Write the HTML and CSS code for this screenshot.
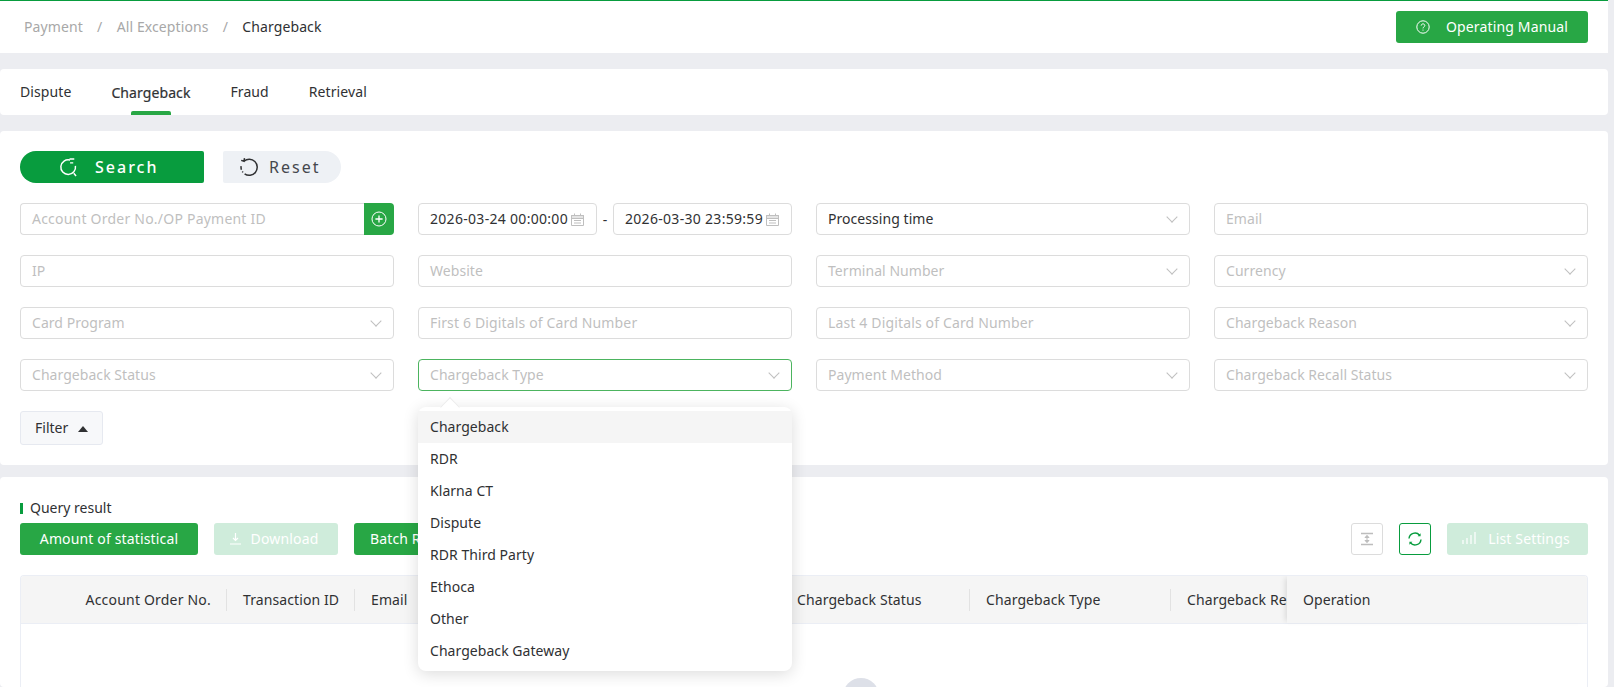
FILE: index.html
```html
<!DOCTYPE html>
<html>
<head>
    <meta http-equiv="Content-Type" content="text/html; charset=utf-8" />
    <title>Chargeback</title>
    <link rel="stylesheet" href="styles.css">
</head>
<body>
    <div class="page">
        <div class="header">
            <div class="crumbs">
                <span class="crumb">Payment</span>
                <span class="crumb-sep">/</span>
                <span class="crumb">All Exceptions</span>
                <span class="crumb-sep">/</span>
                <span class="crumb-now">Chargeback</span>
            </div>
            <div class="btn btn-manual">
                <svg class="icon-manual" width="14" height="14" viewBox="0 0 14 14" fill="none" stroke="#fff" stroke-width="1">
                    <circle cx="7" cy="7" r="6.2"></circle>
                    <path d="M5.2 5.6c0-1 .8-1.7 1.8-1.7s1.8.7 1.8 1.6c0 1.4-1.8 1.4-1.8 2.9"></path>
                    <path d="M7 9.6v1"></path>
                </svg>
                Operating Manual
            </div>
        </div>

        <div class="tabs">
            <span class="tab">Dispute</span>
            <span class="tab tab-on">Chargeback</span>
            <span class="tab">Fraud</span>
            <span class="tab">Retrieval</span>
        </div>

        <div class="card search-card">
            <div class="search-btns">
                <div class="btn-search">
                    <svg width="21" height="21" viewBox="0 0 20 20" fill="none" stroke="#fff" stroke-width="1.4">
                        <path d="M11.5 2.9A7 7 0 1 0 16.6 8.5"></path>
                        <path d="M11 2h4.5M11.5 5.6h3M15 15.5l2.2 2.6"></path>
                    </svg>
                    <span>Search</span>
                </div>
                <div class="btn-reset">
                    <svg width="20" height="20" viewBox="0 0 20 20" fill="none" stroke="#303133" stroke-width="1.5">
                        <path d="M5 4.2A8 8 0 1 1 5.6 16.8" ></path>
                        <path d="M2.4 12.8a8 8 0 0 1-.3-3.6M4 15.4l-.7-.9" ></path>
                        <path d="M2.2 3.4 5 4.2l.5-3"></path>
                    </svg>
                    <span>Reset</span>
                </div>
            </div>

            <div class="form-grid">
                <div class="field-group">
                    <div class="field field-joined"><span class="ph wide">Account Order No./OP Payment ID</span></div>
                    <div class="field-add">
                        <svg width="16" height="16" viewBox="0 0 16 16" fill="none" stroke="#fff" stroke-width="1">
                            <circle cx="8" cy="8" r="7"></circle>
                            <path d="M8 4.4v7.2M4.4 8h7.2" stroke-width="1.3"></path>
                        </svg>
                    </div>
                </div>
                <div class="date-range">
                    <div class="field field-date">
                        <span class="val date-val">2026-03-24 00:00:00</span>
                        <svg class="icon-cal" width="13" height="13" viewBox="0 0 13 13" fill="none" stroke="#bfbfbf">
                            <path d="M.5 2.5h12v3H.5z" fill="#e4e4e4"></path>
                            <path d="M.5 2.5h12v10H.5zM3.5 .5v2M9.5 .5v2M3 7.5h7M3 10h7"></path>
                        </svg>
                    </div>
                    <span class="date-sep">-</span>
                    <div class="field field-date">
                        <span class="val date-val">2026-03-30 23:59:59</span>
                        <svg class="icon-cal" width="13" height="13" viewBox="0 0 13 13" fill="none" stroke="#bfbfbf">
                            <path d="M.5 2.5h12v3H.5z" fill="#e4e4e4"></path>
                            <path d="M.5 2.5h12v10H.5zM3.5 .5v2M9.5 .5v2M3 7.5h7M3 10h7"></path>
                        </svg>
                    </div>
                </div>
                <div class="field field-select"><span class="val">Processing time</span><i class="caret"></i></div>
                <div class="field"><span class="ph">Email</span></div>

                <div class="field"><span class="ph">IP</span></div>
                <div class="field"><span class="ph">Website</span></div>
                <div class="field field-select"><span class="ph">Terminal Number</span><i class="caret"></i></div>
                <div class="field field-select"><span class="ph">Currency</span><i class="caret"></i></div>

                <div class="field field-select"><span class="ph">Card Program</span><i class="caret"></i></div>
                <div class="field"><span class="ph digits">First 6 Digitals of Card Number</span></div>
                <div class="field"><span class="ph digits">Last 4 Digitals of Card Number</span></div>
                <div class="field field-select"><span class="ph">Chargeback Reason</span><i class="caret"></i></div>

                <div class="field field-select"><span class="ph">Chargeback Status</span><i class="caret"></i></div>
                <div class="field field-select field-open">
                    <span class="ph">Chargeback Type</span><i class="caret"></i>
                    <div class="dropdown">
                        <i class="dropdown-arrow"></i>
                        <div class="dropdown-item dropdown-item-on">Chargeback</div>
                        <div class="dropdown-item">RDR</div>
                        <div class="dropdown-item">Klarna CT</div>
                        <div class="dropdown-item">Dispute</div>
                        <div class="dropdown-item">RDR Third Party</div>
                        <div class="dropdown-item">Ethoca</div>
                        <div class="dropdown-item">Other</div>
                        <div class="dropdown-item">Chargeback Gateway</div>
                    </div>
                </div>
                <div class="field field-select"><span class="ph">Payment Method</span><i class="caret"></i></div>
                <div class="field field-select"><span class="ph">Chargeback Recall Status</span><i class="caret"></i></div>
            </div>

            <div class="btn-filter">Filter <i class="tri-up"></i></div>
        </div>

        <div class="card result-card">
            <div class="result-title">Query result</div>
            <div class="toolbar">
                <div class="btn btn-amount">Amount of statistical</div>
                <div class="btn btn-off btn-download">
                    <svg width="13" height="13" viewBox="0 0 13 13" fill="none" stroke="#fff" stroke-width="1.2">
                        <path d="M6.5 1v7M4 6l2.5 2.5L9 6M1 12h11"></path>
                    </svg>
                    Download
                </div>
                <div class="btn btn-batch">Batch Refund</div>
                <div class="toolbar-right">
                    <div class="icon-btn">
                        <svg width="14" height="14" viewBox="0 0 14 14" fill="none" stroke="#bdbdbd">
                            <path d="M1 1.5h12M1 12.5h12" stroke-width="1.5"></path>
                            <path d="M7 3.5v7" stroke-width="1"></path>
                            <path d="M5 5.5 7 3.5l2 2zM5 8.5l2 2 2-2z" fill="#bdbdbd"></path>
                        </svg>
                    </div>
                    <div class="icon-btn icon-btn-on">
                        <svg width="14" height="14" viewBox="0 0 14 14" fill="none" stroke="#089c3e" stroke-width="1.4">
                            <path d="M1 6.5A6 6 0 0 1 11.6 3.2"></path>
                            <path d="M13 7.5A6 6 0 0 1 2.4 10.8"></path>
                            <path d="M12.6 1.2v3h-3zM1.4 12.8v-3h3z" fill="#089c3e" stroke="none"></path>
                        </svg>
                    </div>
                    <div class="btn btn-off btn-settings">
                        <svg width="14" height="13" viewBox="0 0 14 13" fill="none" stroke="#fff" stroke-width="1.2">
                            <path d="M1 12V8M5 12V6M9 12V3M13 12V0"></path>
                        </svg>
                        List Settings
                    </div>
                </div>
            </div>

            <div class="table">
                <div class="thead">
                    <div class="thead-scroll">
                        <div class="th th-order">Account Order No.</div>
                        <div class="th th-trans">Transaction ID</div>
                        <div class="th th-email">Email</div>
                        <div class="th th-status">Chargeback Status</div>
                        <div class="th th-type">Chargeback Type</div>
                        <div class="th th-reason">Chargeback Reason</div>
                    </div>
                    <div class="th-fixed">Operation</div>
                </div>
                <div class="tbody">
                    <div class="empty-dot"></div>
                </div>
            </div>
        </div>
    </div>
</body>
</html>
```

FILE: styles.css
```css
* {
    margin: 0;
    padding: 0;
    box-sizing: border-box;
}

html, body {
    width: 100%;
    height: 100%;
    overflow: hidden;
}

body {
    background: #ecedf1;
    font-family: "Noto Sans", "Liberation Sans", sans-serif;
    font-size: 14px;
    color: #303133;
}

.page {
    width: 1608px;
}

.wide {
    letter-spacing: 0.22px;
}

.digits {
    letter-spacing: 0.15px;
}

.btn {
    display: flex;
    align-items: center;
    justify-content: center;
    height: 32px;
    padding-bottom: 2px;
    border-radius: 3px;
    background: #28a745;
    color: #fff;
    letter-spacing: 0.15px;
}

.header {
    display: flex;
    align-items: center;
    justify-content: space-between;
    height: 53px;
    padding: 0 20px 0 24px;
    background: #fff;
    border-top: 1px solid #089c3e;
}

.crumbs {
    padding-bottom: 1px;
    letter-spacing: 0.1px;
}

.crumb {
    color: #a8a8a8;
}

.crumb-sep {
    margin: 0 10.5px;
    color: #a8a8a8;
}

.btn-manual {
    width: 192px;
}

.icon-manual {
    margin: 2px 16px 0 0;
}

.tabs {
    display: flex;
    gap: 40px;
    height: 46px;
    margin-top: 16px;
    padding: 0 20px;
    background: #fff;
    border-radius: 4px;
    letter-spacing: 0.09px;
}

.tab {
    position: relative;
    line-height: 45px;
}

.tab-on {
    line-height: 47px;
    -webkit-text-stroke: 0.2px #303133;
}

.tab-on::after {
    content: "";
    position: absolute;
    left: 20px;
    bottom: 0;
    width: 40px;
    height: 4px;
    border-radius: 2px 2px 0 0;
    background: #28a745;
}

.card {
    background: #fff;
    border-radius: 4px;
}

.search-card {
    height: 334px;
    margin-top: 16px;
    padding: 20px;
}

.search-btns {
    display: flex;
    gap: 19px;
    height: 32px;
}

.btn-search, .btn-reset {
    display: flex;
    align-items: center;
    font-size: 16px;
    letter-spacing: 2px;
}

.btn-search {
    width: 184px;
    padding-left: 38px;
    gap: 16px;
    background: #089c3e;
    color: #fff;
    font-weight: 500;
    border-radius: 16px 2px 2px 16px;
}

.btn-reset {
    width: 118px;
    padding-left: 16px;
    gap: 10px;
    background: #eef1f5;
    color: #44474d;
    border-radius: 2px 16px 16px 2px;
}

.form-grid {
    display: grid;
    grid-template-columns: repeat(4, 374px);
    gap: 20px 24px;
    margin-top: 20px;
}

.field {
    display: flex;
    align-items: center;
    position: relative;
    height: 32px;
    padding: 0 11px 2px;
    background: #fff;
    border: 1px solid #dcdcdc;
    border-radius: 4px;
    letter-spacing: 0.05px;
}

.ph {
    color: #bfbfbf;
}

.val {
    color: #303133;
}

.date-val {
    letter-spacing: 0.3px;
}

.field-select {
    justify-content: space-between;
}

.field-open {
    border-color: #4cb45f;
}

.caret {
    width: 8px;
    height: 8px;
    margin: -3px 2px 0 0;
    border-right: 1px solid #bfbfbf;
    border-bottom: 1px solid #bfbfbf;
    transform: rotate(45deg);
}

.field-group {
    display: flex;
}

.field-joined {
    flex: 1;
    border-right: none;
    border-radius: 4px 0 0 4px;
}

.field-add {
    display: flex;
    align-items: center;
    justify-content: center;
    width: 30px;
    background: #28a745;
    border-radius: 0 4px 4px 0;
}

.date-range {
    display: flex;
    align-items: center;
}

.field-date {
    flex: 1;
    justify-content: space-between;
    padding: 0 12px 2px 11px;
}

.icon-cal {
    margin-top: 2px;
}

.date-sep {
    width: 16px;
    text-align: center;
}

.btn-filter {
    display: flex;
    align-items: center;
    gap: 10px;
    width: 83px;
    height: 34px;
    margin-top: 20px;
    padding: 0 0 2px 14px;
    background: #f7f8fa;
    border: 1px solid #e6e9f0;
    border-radius: 3px;
}

.tri-up {
    width: 0;
    height: 0;
    margin-top: 3px;
    border-left: 5px solid transparent;
    border-right: 5px solid transparent;
    border-bottom: 6px solid #303133;
}

.dropdown {
    position: absolute;
    left: -1px;
    top: 47px;
    z-index: 10;
    width: 374px;
    padding: 4px 0;
    background: #fff;
    border-radius: 8px;
    box-shadow: 0 3px 16px rgba(0, 0, 0, 0.14);
}

.dropdown-arrow {
    position: absolute;
    left: 25px;
    top: -7px;
    width: 14px;
    height: 14px;
    background: #fff;
    border-left: 1px solid #ececec;
    border-top: 1px solid #ececec;
    transform: rotate(45deg);
}

.dropdown-item {
    position: relative;
    height: 32px;
    line-height: 32px;
    padding-left: 12px;
}

.dropdown-item-on {
    background: #f5f5f5;
}

.result-card {
    height: 210px;
    margin-top: 12px;
    padding: 21px 20px 0;
}

.result-title {
    height: 20px;
    line-height: 20px;
    padding-left: 10px;
    position: relative;
}

.result-title::before {
    content: "";
    position: absolute;
    left: 0;
    top: 5px;
    width: 3px;
    height: 11px;
    background: #089c3e;
}

.toolbar {
    display: flex;
    gap: 16px;
    margin-top: 5px;
}

.btn-amount {
    width: 178px;
}

.btn-off {
    background: #cfecdb;
}

.btn-download {
    gap: 9px;
    width: 124px;
    padding-right: 5px;
}

.btn-batch {
    width: 120px;
    padding-left: 2px;
}

.toolbar-right {
    display: flex;
    gap: 16px;
    margin-left: auto;
}

.icon-btn {
    display: flex;
    align-items: center;
    justify-content: center;
    width: 32px;
    height: 32px;
    border: 1px solid #dcdcdc;
    border-radius: 3px;
}

.icon-btn-on {
    border-color: #089c3e;
}

.btn-settings {
    gap: 12px;
    width: 141px;
    padding-right: 3px;
}

.table {
    height: 112px;
    margin-top: 20px;
    border: 1px solid #ebeef5;
    border-bottom: none;
    border-radius: 4px 4px 0 0;
    overflow: hidden;
}

.thead {
    display: flex;
    height: 48px;
    background: #f5f5f5;
    border-bottom: 1px solid #ebeef5;
    letter-spacing: 0.1px;
}

.thead-scroll {
    display: flex;
    align-items: center;
    width: 1266px;
    overflow: hidden;
}

.th {
    flex: none;
    height: 22px;
    line-height: 22px;
    padding: 0 16px;
    border-right: 1px solid #e2e2e2;
    white-space: nowrap;
}

.th-order {
    width: 206px;
    padding-right: 15px;
    text-align: right;
    letter-spacing: 0.2px;
}

.th-trans {
    width: 128px;
}

.th-email {
    width: 426px;
}

.th-status {
    width: 189px;
}

.th-type {
    width: 201px;
}

.th-reason {
    width: 200px;
}

.th-fixed {
    flex: 1;
    line-height: 47px;
    padding-left: 16px;
    box-shadow: -4px 0 5px -2px rgba(0, 0, 0, 0.1);
}

.tbody {
    height: 63px;
    padding: 54px 0 0 822px;
    overflow: hidden;
}

.empty-dot {
    width: 36px;
    height: 36px;
    border-radius: 50%;
    background: #dde0e8;
}
```
